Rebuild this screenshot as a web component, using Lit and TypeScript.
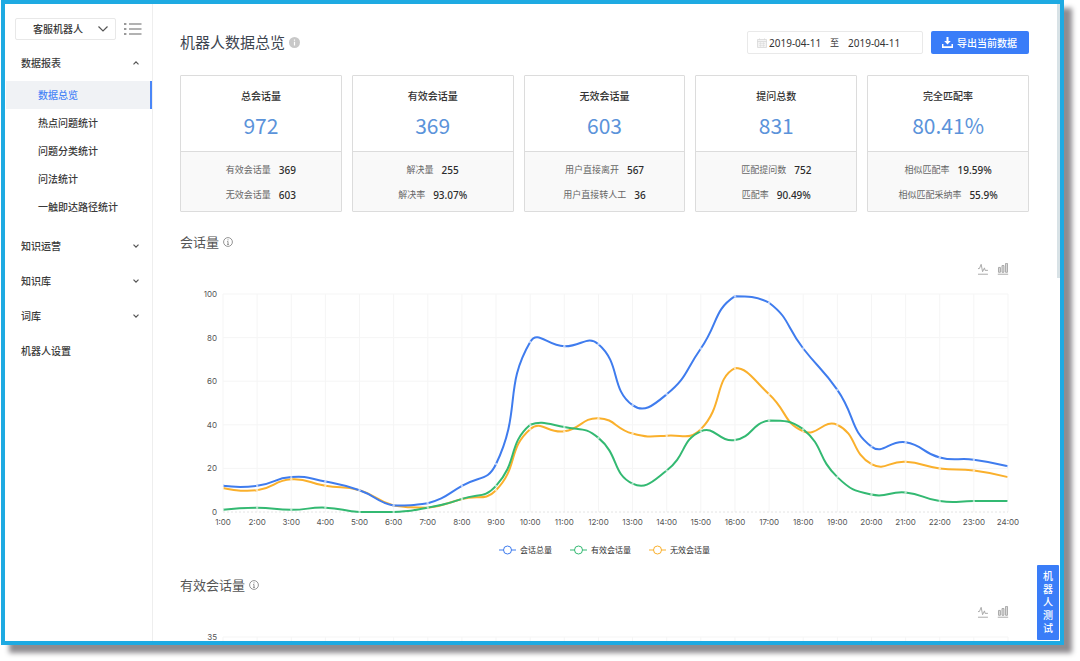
import { LitElement, html, svg, css } from "lit";
import { customElement, property, state } from "lit/decorators.js";
import { classMap } from "lit/directives/class-map.js";

interface Series {
  name: string;
  color: string;
  values: number[];
}

interface StatCard {
  label: string;
  value: string;
  rows: [string, string][];
}

type Point = [number, number];

const BLUE = "#3f7cee";
const GREEN = "#33b972";
const ORANGE = "#fab02c";

const SESSION_SERIES: Series[] = [
  {
    name: "会话总量",
    color: BLUE,
    values: [12, 12, 16, 14, 10, 3, 4, 12, 22, 78, 76, 77, 49, 54, 75, 99, 96, 75, 56, 30, 32, 25, 24, 21],
  },
  {
    name: "有效会话量",
    color: GREEN,
    values: [1, 2, 1, 2, 0, 0, 2, 6, 12, 40, 39, 34, 13, 19, 37, 33, 42, 38, 16, 8, 9, 5, 5, 5],
  },
  {
    name: "无效会话量",
    color: ORANGE,
    values: [11, 10, 15, 12, 10, 3, 2, 6, 10, 38, 37, 43, 36, 35, 38, 66, 54, 37, 40, 22, 23, 20, 19, 16],
  },
];

const VALID_SERIES: Series[] = [
  {
    name: "解决量",
    color: GREEN,
    values: [1, 1, 1, 1, 0, 0, 1, 4, 8, 28, 27, 24, 9, 13, 26, 23, 30, 27, 11, 6, 6, 3, 3, 3],
  },
];

const CARDS: StatCard[] = [
  { label: "总会话量", value: "972", rows: [["有效会话量", "369"], ["无效会话量", "603"]] },
  { label: "有效会话量", value: "369", rows: [["解决量", "255"], ["解决率", "93.07%"]] },
  { label: "无效会话量", value: "603", rows: [["用户直接离开", "567"], ["用户直接转人工", "36"]] },
  { label: "提问总数", value: "831", rows: [["匹配提问数", "752"], ["匹配率", "90.49%"]] },
  { label: "完全匹配率", value: "80.41%", rows: [["相似匹配率", "19.59%"], ["相似匹配采纳率", "55.9%"]] },
];

const REPORTS = ["数据总览", "热点问题统计", "问题分类统计", "问法统计", "一触即达路径统计"];

/** Smooth curve through the points, with control points kept inside the series' own bounds. */
function smoothPath(points: Point[], smooth = 0.5): string {
  const xs = points.map((p) => p[0]);
  const ys = points.map((p) => p[1]);
  const min: Point = [Math.min(...xs), Math.min(...ys)];
  const max: Point = [Math.max(...xs), Math.max(...ys)];
  const clamp = (p: Point): Point => [
    Math.min(max[0], Math.max(min[0], p[0])),
    Math.min(max[1], Math.max(min[1], p[1])),
  ];
  const fmt = (p: Point) => `${p[0].toFixed(2)},${p[1].toFixed(2)}`;
  let d = `M${fmt(points[0])}`;
  let out = points[0];
  for (let i = 1; i < points.length; i++) {
    const prev = points[i - 1];
    const cur = points[i];
    const next = points[i + 1] ?? cur;
    const v: Point = [next[0] - prev[0], next[1] - prev[1]];
    const before = Math.hypot(cur[0] - prev[0], cur[1] - prev[1]);
    const after = Math.hypot(next[0] - cur[0], next[1] - cur[1]);
    const ratio = after / (after + before);
    const k = smooth * (1 - ratio);
    const into: Point = i === points.length - 1 ? cur : [cur[0] - v[0] * k, cur[1] - v[1] * k];
    d += `C${fmt(clamp(out))} ${fmt(clamp(into))} ${fmt(cur)}`;
    out = [cur[0] + v[0] * smooth * ratio, cur[1] + v[1] * smooth * ratio];
  }
  return d;
}

@customElement("trend-chart")
class TrendChart extends LitElement {
  @property() heading = "";
  @property({ type: Number }) max = 100;
  @property({ type: Number }) step = 20;
  @property({ attribute: false }) series: Series[] = [];

  static styles = css`
    :host { display: block; }
    .heading { display: flex; align-items: center; gap: 4px; height: 24px; }
    h2 { margin: 0; font-size: 13px; line-height: 24px; font-weight: 400; color: #555; }
    .info { display: block; width: 10px; height: 10px; }
    .tools { display: flex; justify-content: flex-end; gap: 8px; padding: 9px 20px 8px 0; }
    .tool { display: block; width: 12px; height: 12px; padding: 0; border: 0; background: none; cursor: pointer; }
    .tool svg { display: block; width: 12px; height: 12px; fill: none; stroke: #a8a8a8; stroke-width: 5; }
    .tool .bars { fill: #dcdcdc; }
    .plot { display: block; width: 100%; height: auto; }
    .grid { stroke: #f5f5f5; stroke-width: 1; }
    .axis { stroke: #e4e4e4; stroke-width: 1; stroke-dasharray: 2 2; }
    .tick { font-family: Inter, "Liberation Sans", sans-serif; font-size: 8px; fill: #555; }
    .line { fill: none; stroke-width: 2; }
    .dot { fill: #fff; fill-opacity: 0.6; }
    .legend { display: flex; justify-content: center; gap: 18px; margin: 12px 0 0; padding: 0; list-style: none; }
    .legend li { display: flex; align-items: center; gap: 4px; font-size: 8px; line-height: 12px; color: #333; }
    .key { display: block; width: 17px; height: 10px; fill: #fff; }
  `;

  render() {
    const left = 43;
    const right = 828;
    const top = 11;
    const bottom = 229;
    const x = (i: number) => left + (i * (right - left)) / 23;
    const y = (v: number) => bottom - (v * (bottom - top)) / this.max;
    const hours = Array.from({ length: 24 }, (_, i) => i);
    const levels = Array.from({ length: Math.floor(this.max / this.step) + 1 }, (_, i) => i * this.step);
    return html`
      <div class="heading">
        <h2>${this.heading}</h2>
        <svg class="info" viewBox="0 0 10 10" aria-hidden="true">
          <circle cx="5" cy="5" r="4.4" fill="none" stroke="#888" stroke-width=".9" />
          <path d="M5 2.3v1.1M4.2 4.5H5v2.9M4 7.4h2" fill="none" stroke="#888" stroke-width=".9" />
        </svg>
      </div>
      <div class="tools">
        <button class="tool" aria-label="折线图">
          <svg viewBox="0 0 60 62"><path d="M4.1,28.9h7.1l9.3-22l7.4,38l9.7-19.7l3,12.8h14.9M4.1,58h51.4" /></svg>
        </button>
        <button class="tool" aria-label="柱状图">
          <svg class="bars" viewBox="0 0 60 62"><path d="M6.7,22.9h10V48h-10V22.9zM24.9,13h10v35h-10V13zM43.2,2h10v46h-10V2zM3.1,58h53.7" /></svg>
        </button>
      </div>
      <svg class="plot" viewBox="0 0 849 249">
        ${hours.map((i) => svg`<line class="grid" x1=${x(i)} x2=${x(i)} y1=${top} y2=${bottom} />`)}
        ${levels.map(
          (v) => svg`
            <line class=${v === 0 ? "axis" : "grid"} x1=${left} x2=${right} y1=${y(v)} y2=${y(v)} />
            <text class="tick" x=${left - 6} y=${y(v) + 3} text-anchor="end">${v}</text>`,
        )}
        ${hours.map((i) => svg`<text class="tick" x=${x(i)} y=${bottom + 13} text-anchor="middle">${i + 1}:00</text>`)}
        ${[...this.series].sort((a, b) => (a.color === ORANGE ? -1 : b.color === ORANGE ? 1 : 0)).map((s) => {
          const points = s.values.map((v, i): Point => [x(i), y(v)]);
          return svg`
            <path class="line" stroke=${s.color} d=${smoothPath(points)} />
            ${points.map((p) => svg`<circle class="dot" cx=${p[0]} cy=${p[1]} r="1.2" />`)}`;
        })}
      </svg>
      <ul class="legend">
        ${this.series.map(
          (s) => html`<li>
            <svg class="key" viewBox="0 0 17 10" stroke=${s.color} aria-hidden="true">
              <path d="M0 5h17" /><circle cx="8.5" cy="5" r="4" />
            </svg>${s.name}
          </li>`,
        )}
      </ul>
    `;
  }
}

@customElement("side-menu")
class SideMenu extends LitElement {
  @state() private active = REPORTS[0];

  static styles = css`
    :host { display: block; border-right: 1px solid #eee; }
    .top { display: flex; align-items: center; gap: 8px; padding: 14px 10px 6px; }
    .picker { display: grid; flex: 1; align-items: center; }
    .picker > * { grid-area: 1 / 1; }
    select {
      appearance: none; box-sizing: border-box; width: 100%; height: 22px; margin: 0; padding: 0 24px 0 17px;
      border: 1px solid #e8e8e8; border-radius: 2px; background: #fff; color: #3a3a3a;
      font-family: inherit; font-size: 10px; font-weight: 500;
    }
    .arrow { justify-self: end; width: 10px; height: 6px; margin-right: 8px; pointer-events: none; }
    .list { display: block; width: 18px; height: 14px; padding: 0; border: 0; background: none; }
    .list svg { display: block; width: 18px; height: 14px; }
    svg { fill: none; stroke: #555; stroke-width: 1.2; }
    .group {
      display: flex; align-items: center; justify-content: space-between; box-sizing: border-box;
      width: 100%; height: 35px; padding: 0 13px 2px 16px; border: 0; background: none;
      font-family: inherit; font-size: 10px; font-weight: 500; color: #3a3a3a; cursor: pointer;
    }
    .group svg { width: 6px; height: 4px; }
    .sub { margin: 0 0 8px 1px; padding: 0; list-style: none; }
    .sub a {
      display: block; padding-left: 32px; border-right: 2px solid transparent; font-size: 10px;
      font-weight: 500; line-height: 28px; color: #3a3a3a; text-decoration: none;
    }
    .sub a.active { background: #f0f2f5; border-color: #4a86f7; color: #4a86f7; }
  `;

  render() {
    return html`
      <div class="top">
        <div class="picker">
          <select aria-label="机器人"><option>客服机器人</option></select>
          <svg class="arrow" viewBox="0 0 10 6"><path d="M.5 .5L5 5L9.5 .5" /></svg>
        </div>
        <button class="list" aria-label="列表">
          <svg viewBox="0 0 18 14">
            <path d="M0 2h2.4M0 7h2.4M0 12h2.4" stroke="#999" stroke-width="2" />
            <path d="M5 2h12.5M5 7h12.5M5 12h12.5" stroke="#999" stroke-width="1.3" />
          </svg>
        </button>
      </div>
      <nav>
        <button class="group">数据报表<svg viewBox="0 0 6 4"><path d="M.5 3.4L3 .9L5.5 3.4" /></svg></button>
        <ul class="sub">
          ${REPORTS.map(
            (name) => html`<li>
              <a href="#" class=${classMap({ active: name === this.active })} @click=${() => (this.active = name)}>${name}</a>
            </li>`,
          )}
        </ul>
        ${["知识运营", "知识库", "词库"].map(
          (name) => html`<button class="group">${name}<svg viewBox="0 0 6 4"><path d="M.5 .6L3 3.1L5.5 .6" /></svg></button>`,
        )}
        <button class="group">机器人设置</button>
      </nav>
    `;
  }
}

@customElement("app-root")
class AppRoot extends LitElement {
  static styles = css`
    :host {
      display: block; box-sizing: border-box; height: 100vh; padding: 0 16px 16px 1px; overflow: hidden;
      background: #fff; font-family: "Noto Sans", "Noto Sans CJK SC", sans-serif; color: #333;
    }
    .frame {
      position: relative; display: grid; grid-template-columns: 148px 1fr; box-sizing: border-box; height: 100%;
      border: 4px solid #1eaae2; background: #fff; box-shadow: 8px 8px 5px #8f8c90;
    }
    main { min-width: 0; overflow-y: auto; scrollbar-width: none; padding: 27px 31px 0 27px; }
    header { display: flex; align-items: center; gap: 8px; margin-bottom: 21px; }
    .title { display: flex; flex: 1; align-items: center; gap: 4px; }
    h1 { margin: 0; font-size: 15px; line-height: 23px; font-weight: 400; color: #3d4550; }
    .info { display: block; width: 11px; height: 11px; }
    .range {
      display: flex; align-items: center; box-sizing: border-box; width: 176px; height: 23px; padding-left: 9px;
      border: 1px solid #e9e9e9; border-radius: 2px;
    }
    .calendar { width: 10px; height: 10px; margin-right: 2px; }
    .range input {
      width: 54px; padding: 0; border: 0; outline: 0; background: none;
      font-family: inherit; font-size: 10px; color: #333;
    }
    .range span { padding: 0 9px 0 7px; font-size: 9px; }
    .export {
      display: flex; align-items: center; gap: 4px; height: 23px; padding: 0 12px 0 11px; border: 0; border-radius: 2px;
      background: #3a7df8; color: #fff; font-family: inherit; font-size: 10px; font-weight: 500; cursor: pointer;
    }
    .export svg { width: 11px; height: 11px; }
    .cards { display: grid; grid-template-columns: repeat(5, 1fr); gap: 10px; margin-bottom: 18px; }
    .card { border: 1px solid #dcdcdc; border-radius: 1px; text-align: center; }
    .figure { padding: 12px 0; border-bottom: 1px solid #dcdcdc; }
    .label { font-size: 10px; line-height: 16px; font-weight: 500; }
    .value {
      margin-top: 7px; font-family: "Noto Sans CJK SC", sans-serif;
      font-size: 21px; line-height: 28px; color: #5b93da;
    }
    .details { margin: 0; padding: 5px 0 4px; background: #f9f9f9; }
    .row { display: flex; justify-content: center; align-items: center; gap: 8px; height: 25px; }
    dt { font-size: 9px; color: #666; }
    dd { margin: 0; font-size: 10px; font-weight: 500; color: #2c2c2c; }
    trend-chart { margin-bottom: 17px; }
    .thumb { position: absolute; top: 0; right: 0; width: 3px; height: 43%; background: #d8e2e6; }
    .test {
      position: absolute; right: 1px; bottom: 1px; width: 22px; padding: 5px 6px; border: 0; border-radius: 1px;
      background: #3a7df8; color: #fff; font-family: inherit; font-size: 10px; line-height: 13px; font-weight: 500;
      cursor: pointer;
    }
  `;

  render() {
    return html`
      <div class="frame">
        <side-menu></side-menu>
        <main>
          <header>
            <div class="title">
              <h1>机器人数据总览</h1>
              <svg class="info" viewBox="0 0 11 11" aria-hidden="true">
                <circle cx="5.5" cy="5.5" r="5.5" fill="#c8c8c8" />
                <path d="M5.5 2.4v1.3M5.5 4.8v3.7" stroke="#fff" stroke-width="1.2" />
              </svg>
            </div>
            <div class="range">
              <svg class="calendar" viewBox="0 0 10 10" fill="#f3f3f3" stroke="#d4d4d4" aria-hidden="true">
                <path d="M.5 1.5h9v8h-9zM.5 3.5h9" stroke-width=".7" />
                <path d="M2.5 0v2M7.5 0v2M2 5.5h6M2 7.5h6M3.5 4v5M6.5 4v5" stroke-width=".4" />
              </svg>
              <input aria-label="开始日期" value="2019-04-11" />
              <span>至</span>
              <input aria-label="结束日期" value="2019-04-11" />
            </div>
            <button class="export">
              <svg viewBox="0 0 11 11" fill="#fff" aria-hidden="true">
                <path d="M4.5 0h2v4h2.3L5.5 7.4L2.2 4h2.3z" />
                <path d="M0 7h1.5v2.3h8V7H11v4H0z" />
              </svg>导出当前数据
            </button>
          </header>
          <section class="cards">
            ${CARDS.map(
              (card) => html`<div class="card">
                <div class="figure">
                  <div class="label">${card.label}</div>
                  <div class="value">${card.value}</div>
                </div>
                <dl class="details">
                  ${card.rows.map(([name, value]) => html`<div class="row"><dt>${name}</dt><dd>${value}</dd></div>`)}
                </dl>
              </div>`,
            )}
          </section>
          <trend-chart heading="会话量" .series=${SESSION_SERIES}></trend-chart>
          <trend-chart heading="有效会话量" max="35" step="5" .series=${VALID_SERIES}></trend-chart>
        </main>
        <div class="thumb"></div>
        <button class="test">机器人测试</button>
      </div>
    `;
  }
}
